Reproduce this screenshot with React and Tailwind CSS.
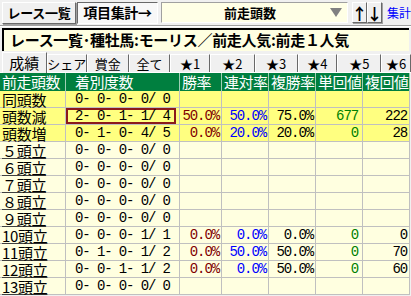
import React from 'react';

const JP = "font-['Noto_Sans_CJK_JP',sans-serif]";
const MONO = "font-['Liberation_Mono','Noto_Sans_CJK_JP',monospace]";

const COLS = [66, 114, 42, 47, 47, 47, 47];
const HEAD = ['前走頭数', '着別度数', '勝率', '連対率', '複勝率', '単回値', '複回値'];

const ROWS = [
  { name: '同頭数', hi: true, cnt: '0- 0- 0- 0/ 0' },
  { name: '頭数減', hi: true, sel: true, cnt: '2- 0- 1- 1/ 4', v: ['50.0%', '50.0%', '75.0%', '677', '222'] },
  { name: '頭数増', hi: true, cnt: '0- 1- 0- 4/ 5', v: ['0.0%', '20.0%', '20.0%', '0', '28'] },
  { name: '５頭立', cnt: '0- 0- 0- 0/ 0' },
  { name: '６頭立', cnt: '0- 0- 0- 0/ 0' },
  { name: '７頭立', cnt: '0- 0- 0- 0/ 0' },
  { name: '８頭立', cnt: '0- 0- 0- 0/ 0' },
  { name: '９頭立', cnt: '0- 0- 0- 0/ 0' },
  { name: '10頭立', cnt: '0- 0- 0- 1/ 1', v: ['0.0%', '0.0%', '0.0%', '0', '0'] },
  { name: '11頭立', cnt: '0- 1- 0- 1/ 2', v: ['0.0%', '50.0%', '50.0%', '0', '70'] },
  { name: '12頭立', cnt: '0- 0- 1- 1/ 2', v: ['0.0%', '0.0%', '50.0%', '0', '60'] },
  { name: '13頭立', cnt: '0- 0- 0- 0/ 0' },
];

const VAL_COLORS = ['text-[#800000]', 'text-[#0000ff]', 'text-black', 'text-[#008000]', 'text-black'];

const TABS = [
  { label: '成績', w: 45, active: true },
  { label: 'シェア', w: 40 },
  { label: '賞金', w: 42 },
  { label: '全て', w: 42 },
  { label: '★1', w: 40 },
  { label: '★2', w: 45 },
  { label: '★3', w: 43 },
  { label: '★4', w: 40 },
  { label: '★5', w: 44 },
  { label: '★6', w: 30 },
];

// raised 3d button
const Btn = ({ children, className = '' }) => (
  <div
    className={`flex items-center justify-center bg-[#f0f0f0] border border-t-white border-l-white
      border-r-[#696969] border-b-[#696969] shadow-[1px_1px_0_#a0a0a0] ${className}`}
  >
    {children}
  </div>
);

export default function App() {
  return (
    <div className={`w-[411px] h-[296px] overflow-hidden bg-[#f0f0f0] ${JP}`}>
      {/* toolbar */}
      <div className="flex items-center h-[25px] pl-[2px]">
        <Btn className="w-[74px] h-[22px] text-[13px] font-bold tracking-[-0.3px] whitespace-nowrap">レース一覧</Btn>
        <div className="ml-[1px] w-[81px] h-[22px] flex items-center justify-center text-[14px] font-bold tracking-[-0.3px] whitespace-nowrap bg-[#f8f8f8] border border-t-[#696969] border-l-[#696969] border-r-white border-b-white">
          項目集計→
        </div>
        <div className="ml-[3px] w-[187px] h-[21px] flex items-center bg-[#ffffe6] border border-t-[#a0a0a0] border-l-[#a0a0a0] border-r-white border-b-white">
          <span className="flex-1 text-center text-[13px] font-bold pl-[8px]">前走頭数</span>
          <span className="w-0 h-0 mr-[5px] border-l-[6px] border-r-[6px] border-t-[9px] border-l-transparent border-r-transparent border-t-[#808080]" />
        </div>
        <Btn className="ml-[4px] w-[15px] h-[21px] text-[16px] font-bold">↑</Btn>
        <Btn className="w-[15px] h-[21px] text-[16px] font-bold">↓</Btn>
        <span className="ml-[5px] text-[12px] text-[#0000ff] whitespace-nowrap">集計</span>
      </div>
      <div className="h-[2px] border-t border-[#a0a0a0] border-b border-b-white" />

      {/* title */}
      <div className="px-[2px] pt-[1px]">
        <div className="h-[23px] flex items-center pl-[6px] bg-[#ffffe1] border-t-2 border-l-2 border-black whitespace-nowrap overflow-hidden text-[15px] font-bold tracking-[-0.3px]">
          レース一覧･種牡馬:モーリス／前走人気:前走１人気
        </div>
      </div>

      {/* tabs */}
      <div className="flex items-end h-[22px] pl-[2px] border-b border-white">
        {TABS.map((t) =>
          t.active ? (
            <div
              key={t.label}
              style={{ width: t.w }}
              className="h-[21px] -mb-[1px] flex items-center justify-center bg-[#f0f0f0] border-t border-l border-white border-r border-r-[#696969] text-[15px]"
            >
              {t.label}
            </div>
          ) : (
            <div
              key={t.label}
              style={{ width: t.w }}
              className="h-[18px] flex items-center justify-center bg-[#f0f0f0] border-t border-l border-white border-r border-r-[#696969] text-[13px] whitespace-nowrap"
            >
              {t.label}
            </div>
          )
        )}
      </div>

      {/* table */}
      <div className="w-[410px]">
        <div className="flex h-[18px] bg-[#007f3f] text-white text-[15px] leading-[18px] tracking-[-0.5px]">
          {HEAD.map((h, i) => (
            <div
              key={h}
              style={{ width: COLS[i] }}
              className={`h-full border-r border-[#9fd0b5] whitespace-nowrap ${i === 1 ? 'pl-[9px]' : 'pl-[2px]'}`}
            >
              {h}
            </div>
          ))}
        </div>
        {ROWS.map((r) => {
          const bg = r.hi ? 'bg-[#ffff80]' : 'bg-[#ffffe0]';
          return (
            <div key={r.name} className={`flex h-[17px] ${bg}`}>
              <div
                style={{ width: COLS[0] }}
                className="h-full flex items-center border-r border-b border-[#c0c0c0] pl-[2px] text-[15px] tracking-[-0.3px] whitespace-nowrap"
              >
                <span
                  className={`block h-[16px] leading-[17px] ${
                    r.hi ? '' : 'underline underline-offset-[1px] decoration-[#404040]'
                  }`}
                >
                  {r.name}
                </span>
              </div>
              <div style={{ width: COLS[1] }} className="h-full border-r border-b border-[#c0c0c0] pr-[3px]">
                <div
                  className={`h-full pl-[7px] ${MONO} text-[14px] tracking-[-1.1px] leading-[13px] whitespace-pre ${
                    r.sel ? 'border-2 border-[#8b1a1a]' : 'border-2 border-transparent'
                  }`}
                >
                  {r.cnt}
                </div>
              </div>
              {[0, 1, 2, 3, 4].map((k) => (
                <div
                  key={k}
                  style={{ width: COLS[k + 2] }}
                  className={`h-full border-r border-b border-[#c0c0c0] text-right ${k === 3 ? 'pr-[4px]' : 'pr-[2px]'} ${MONO} text-[14px] tracking-[-1.1px] leading-[16px] whitespace-nowrap ${VAL_COLORS[k]}`}
                >
                  {r.v ? r.v[k] : ''}
                </div>
              ))}
            </div>
          );
        })}
      </div>
    </div>
  );
}
